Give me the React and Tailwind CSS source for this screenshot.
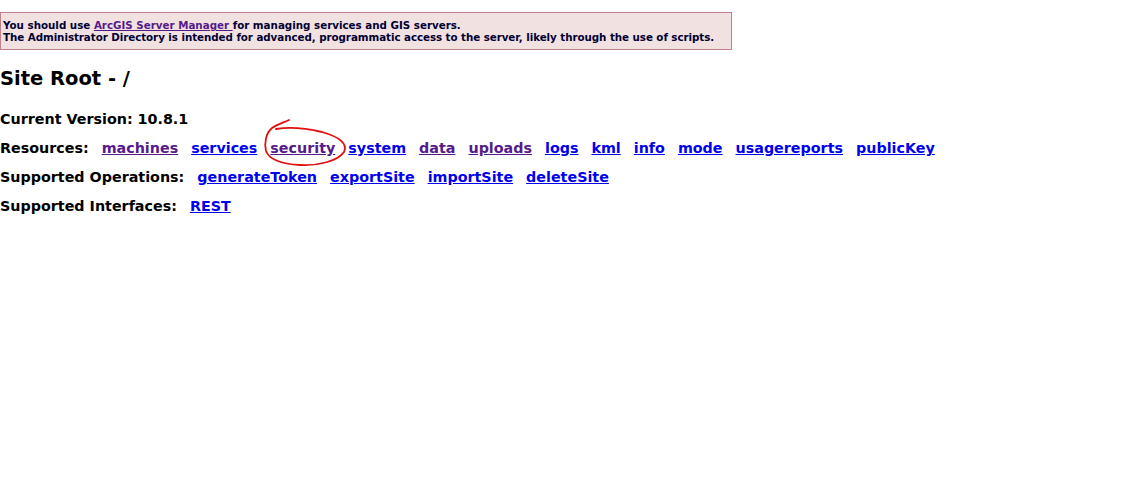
import React from 'react';

const VISITED = 'text-[#551a8b]';
const FRESH = 'text-[#0000ee]';

const resources = [
    { name: 'machines', visited: true },
    { name: 'services' },
    { name: 'security', visited: true },
    { name: 'system' },
    { name: 'data', visited: true },
    { name: 'uploads', visited: true },
    { name: 'logs' },
    { name: 'kml' },
    { name: 'info' },
    { name: 'mode' },
    { name: 'usagereports' },
    { name: 'publicKey' },
];

const operations = [{ name: 'generateToken' }, { name: 'exportSite' }, { name: 'importSite' }, { name: 'deleteSite' }];

const LinkRow = ({ label, links }) => (
    <div className="flex items-center gap-[13px] h-[29px]">
        <span>{label}</span>
        {links.map((l) => (
            <a key={l.name} href="#" className={`underline ${l.visited ? VISITED : FRESH}`}>
                {l.name}
            </a>
        ))}
    </div>
);

export default function App() {
    return (
        <div className="relative min-h-[497px] bg-white text-black font-bold text-[14.3px]" style={{ fontFamily: '"DejaVu Sans", Verdana, sans-serif' }}>
            {/* Warning banner */}
            <div className="pt-[12px]">
                <div className="w-[732px] border border-[#c2808c] bg-[#f2e1e1] text-[#000033] text-[10.3px] leading-[12px] px-[2px] pt-[6px] pb-[6px]">
                    <div>
                        You should use <a href="#" className={`underline ${VISITED}`}>ArcGIS Server Manager </a>for managing services and GIS servers.
                    </div>
                    <div className="tracking-[-0.05px]">The Administrator Directory is intended for advanced, programmatic access to the server, likely through the use of scripts.</div>
                </div>
            </div>

            <h1 className="text-[19.5px] leading-[24px] mt-[17px]">Site Root - /</h1>

            <div className="mt-[14px] h-[29px] flex items-center">Current Version: 10.8.1</div>
            <LinkRow label="Resources:" links={resources} />
            <LinkRow label="Supported Operations:" links={operations} />
            <LinkRow label="Supported Interfaces:" links={[{ name: 'REST' }]} />

            {/* red pen annotation around "security" */}
            <svg className="absolute left-0 top-0 pointer-events-none" width="1144" height="497">
                <path
                    d="M289 120 C282 123 276 125 272 128 C266 133 264 143 266 151 C269 159 280 164 300 165 C318 166 338 161 344 152 C348 144 340 137 322 132 C305 128 288 127 276 129"
                    fill="none"
                    stroke="#e01010"
                    strokeWidth="1.8"
                    strokeLinecap="round"
                />
            </svg>
        </div>
    );
}
